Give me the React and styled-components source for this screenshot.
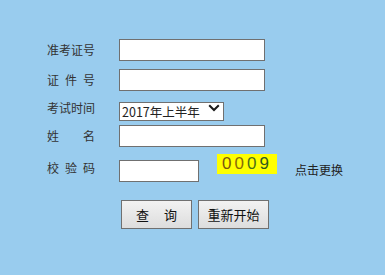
import React from 'react';
import styled, { createGlobalStyle } from 'styled-components';

const Global = createGlobalStyle`
  html, body {
    margin: 0;
    padding: 0;
    background: #99ccee;
  }
  body {
    width: 385px;
    height: 275px;
    overflow: hidden;
    font-family: "Noto Sans CJK SC", "Liberation Sans", sans-serif;
  }
`;

const Form = styled.div`
  display: flex;
  flex-direction: column;
  padding: 39px 0 0 47px;
`;

const Row = styled.div`
  display: flex;
  align-items: ${p => (p.$top ? 'flex-start' : 'center')};
  height: ${p => p.$h}px;
  margin-bottom: ${p => p.$gap}px;
`;

const Label = styled.div`
  width: 48px;
  margin-right: 24px;
  margin-top: ${p => p.$mt || 0}px;
  font-size: 12px;
  line-height: 16px;
  color: #333;
  text-align: justify;
  text-align-last: justify;
  white-space: nowrap;
`;

const TextBox = styled.input`
  box-sizing: border-box;
  width: ${p => p.$w}px;
  height: 22px;
  margin: ${p => p.$mt || 0}px 0 0 0;
  padding: 0 3px;
  border: 1px solid #707070;
  background: #fff;
  outline: none;
  font-size: 13px;
`;

const SelectWrap = styled.div`
  position: relative;
  width: 105px;
  height: 19px;
`;

const Select = styled.select`
  box-sizing: border-box;
  width: 105px;
  height: 19px;
  margin: 0;
  padding: 0 0 0 2px;
  appearance: none;
  border: 1px solid #707070;
  border-radius: 0;
  background: #fff;
  color: #222;
  font-family: "Noto Sans CJK SC", "Liberation Sans", sans-serif;
  font-size: 12.5px;
  line-height: 17px;
  outline: none;
`;

const Chevron = styled.svg`
  position: absolute;
  right: 4px;
  top: 6px;
  pointer-events: none;
`;

const Captcha = styled.div`
  box-sizing: border-box;
  display: flex;
  align-items: center;
  width: 60px;
  height: 20px;
  margin-left: 18px;
  padding-left: 5px;
  background: #ffff00;
  font-family: "Liberation Sans", "DejaVu Sans", sans-serif;
  font-size: 17px;
  letter-spacing: 3px;
`;

const Digit = styled.span`
  color: ${p => p.$c};
`;

const Refresh = styled.div`
  margin: 8px 0 0 18px;
  font-size: 12px;
  line-height: 16px;
  color: #222;
`;

const Buttons = styled.div`
  display: flex;
  gap: 6px;
  padding-left: 74px;
`;

const Button = styled.button`
  box-sizing: border-box;
  display: flex;
  align-items: center;
  justify-content: center;
  gap: ${p => p.$gap || 0}px;
  width: 71px;
  height: 29px;
  padding: 0;
  border: 1px solid #707070;
  border-radius: 0;
  background: linear-gradient(#f2f2f2, #dddddd);
  color: #111;
  font-family: "Noto Sans CJK SC", "Liberation Sans", sans-serif;
  font-size: 13px;
`;

const digits = [
  ['0', '#7a5510'],
  ['0', '#8a6a08'],
  ['0', '#4d7018'],
  ['9', '#2f5a1e'],
];

export default function App() {
  return (
    <>
      <Global />
      <Form>
        <Row $h={22} $gap={8}>
          <Label>准考证号</Label>
          <TextBox $w={146} />
        </Row>
        <Row $h={22} $gap={7}>
          <Label>证件号</Label>
          <TextBox $w={146} />
        </Row>
        <Row $h={19} $gap={8}>
          <Label>考试时间</Label>
          <SelectWrap>
            <Select defaultValue="2017a">
              <option value="2017a">2017年上半年</option>
              <option value="2016b">2016年下半年</option>
            </Select>
            <Chevron width="12" height="8" viewBox="0 0 12 8">
              <path d="M1.2 1.2 L6 6 L10.8 1.2" fill="none" stroke="#1a1a1a" strokeWidth="2" />
            </Chevron>
          </SelectWrap>
        </Row>
        <Row $h={22} $gap={7}>
          <Label>姓名</Label>
          <TextBox $w={146} />
        </Row>
        <Row $h={27} $gap={19} $top>
          <Label $mt={6}>校验码</Label>
          <TextBox $w={80} $mt={6} />
          <Captcha>
            {digits.map(([d, c], i) => (
              <Digit key={i} $c={c}>{d}</Digit>
            ))}
          </Captcha>
          <Refresh>点击更换</Refresh>
        </Row>
        <Buttons>
          <Button $gap={15}>
            <span>查</span>
            <span>询</span>
          </Button>
          <Button>重新开始</Button>
        </Buttons>
      </Form>
    </>
  );
}
